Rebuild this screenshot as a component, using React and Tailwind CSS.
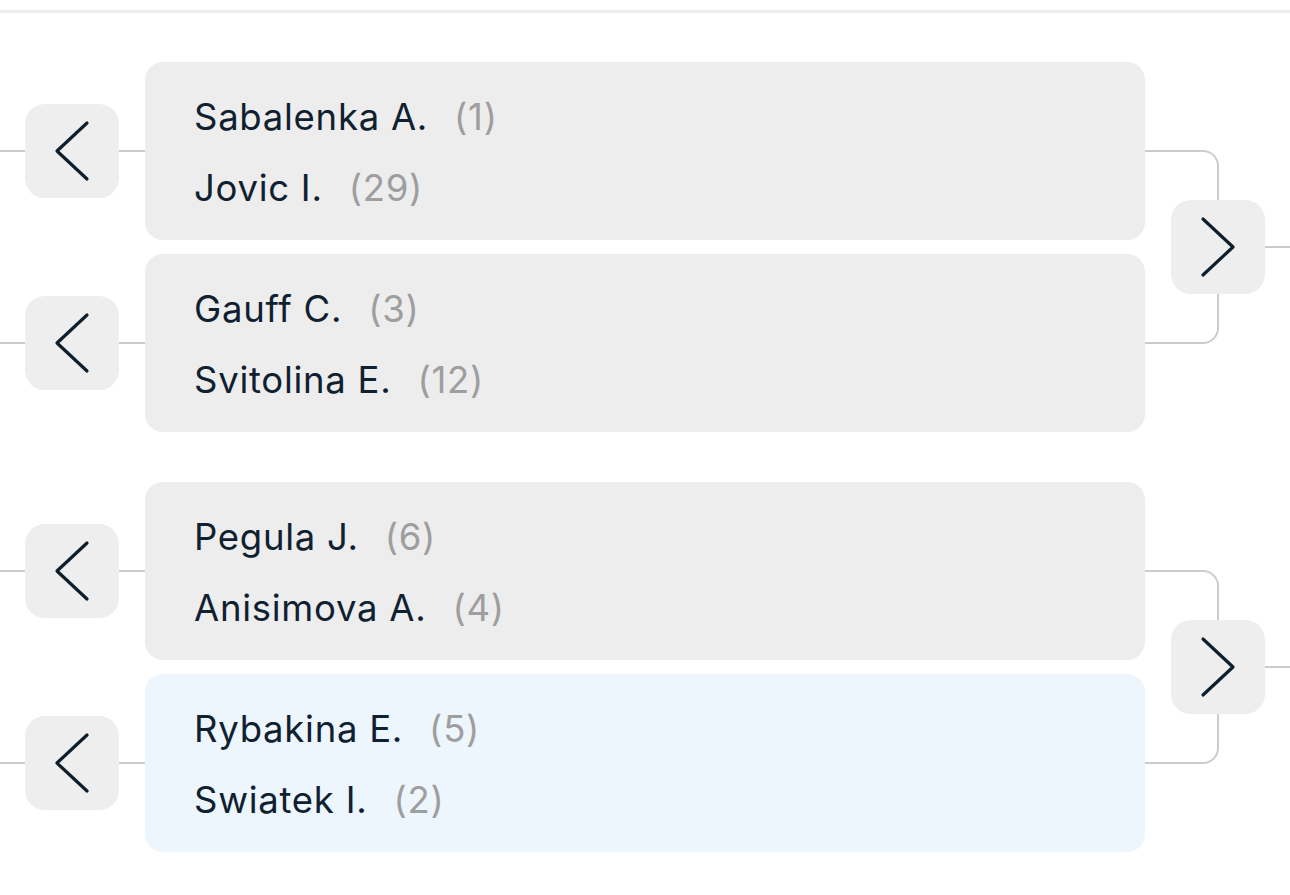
import React from 'react';

const groups = [
  {
    matches: [
      { players: [['Sabalenka A.', '1'], ['Jovic I.', '29']] },
      { players: [['Gauff C.', '3'], ['Svitolina E.', '12']] },
    ],
  },
  {
    matches: [
      { players: [['Pegula J.', '6'], ['Anisimova A.', '4']] },
      { players: [['Rybakina E.', '5'], ['Swiatek I.', '2']], highlight: true },
    ],
  },
];

function Chevron({ dir }) {
  return (
    <svg width="40" height="64" viewBox="0 0 40 64" fill="none">
      {dir === 'left' ? (
        <path d="M35 4 L5 32 L35 60" stroke="#0d1f2d" strokeWidth="3.2" strokeLinecap="round" strokeLinejoin="round" />
      ) : (
        <path d="M5 4 L35 32 L5 60" stroke="#0d1f2d" strokeWidth="3.2" strokeLinecap="round" strokeLinejoin="round" />
      )}
    </svg>
  );
}

function NavButton({ dir }) {
  return (
    <div className="w-[94px] h-[94px] shrink-0 rounded-[20px] bg-[#eeeeee] flex items-center justify-center">
      <Chevron dir={dir} />
    </div>
  );
}

function MatchRow({ match }) {
  return (
    <div className="flex items-center h-[178px]">
      <div className="w-[25px] h-[2px] bg-[#c9cdd0]" />
      <NavButton dir="left" />
      <div className="w-[26px] h-[2px] bg-[#c9cdd0]" />
      <div
        className={`flex-1 h-full rounded-[18px] pl-[49px] pt-[4px] flex flex-col justify-center gap-[30px] ${
          match.highlight ? 'bg-[#edf5fd]' : 'bg-[#ededed]'
        }`}
      >
        {match.players.map(([name, seed]) => (
          <div key={name} className="flex items-baseline text-[36.5px] leading-[41px] tracking-[0.02em]">
            <span className="text-[#0f2130]">{name}</span>
            <span className="ml-[26px] text-[#9e9e9e]">({seed})</span>
          </div>
        ))}
      </div>
    </div>
  );
}

export default function App() {
  return (
    <div className="w-[1290px] h-[895px] bg-white overflow-hidden" style={{ fontFamily: 'Inter, "Noto Sans", sans-serif' }}>
      <div className="h-[10px]" />
      <div className="h-[3px] bg-[#ececec]" />
      <div className="flex flex-col gap-[50px] pt-[49px]">
        {groups.map((g, i) => (
          <div key={i} className="flex">
            <div className="w-[1145px] flex flex-col gap-[14px]">
              {g.matches.map((m, j) => (
                <MatchRow key={j} match={m} />
              ))}
            </div>
            <div className="flex-1 flex items-center">
              {/* bracket connector */}
              <div className="w-[74px] h-[194px] border-2 border-l-0 border-[#c9cdd0] rounded-r-[16px]" />
              <div className="ml-[-48px]">
                <NavButton dir="right" />
              </div>
              <div className="flex-1 h-[2px] bg-[#c9cdd0]" />
            </div>
          </div>
        ))}
      </div>
    </div>
  );
}
